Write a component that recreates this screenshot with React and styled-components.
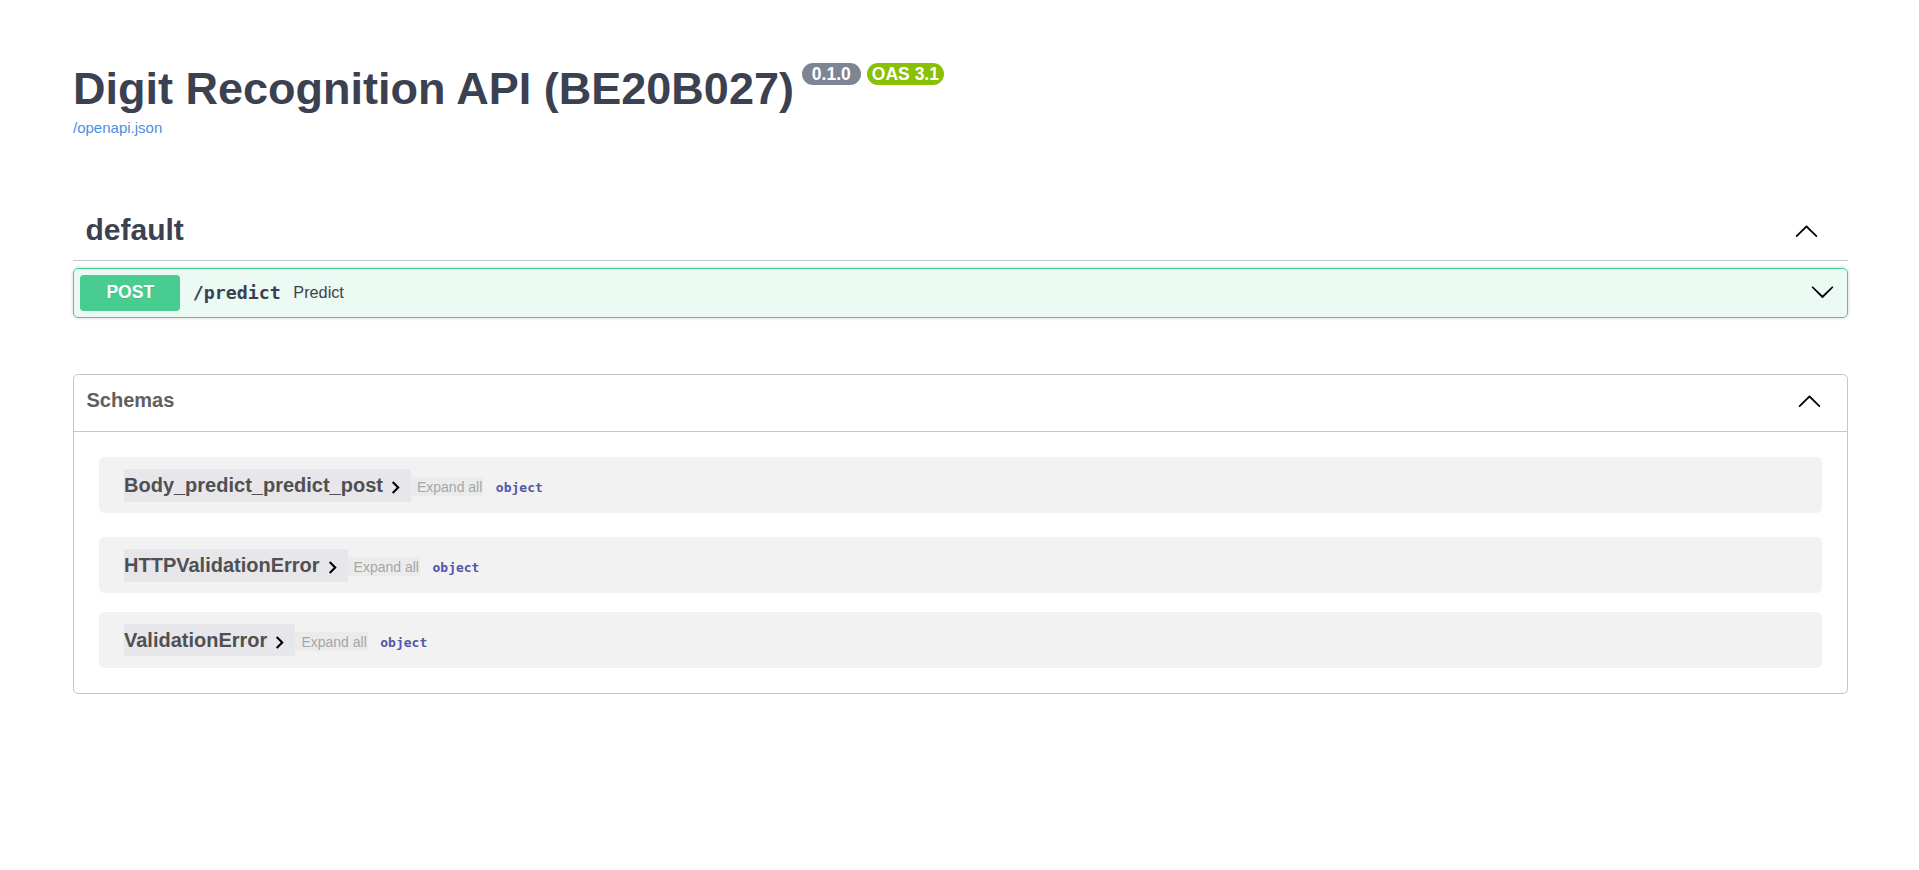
import React from "react";
import styled, { createGlobalStyle } from "styled-components";

const GlobalStyle = createGlobalStyle`
  html, body {
    margin: 0;
    padding: 0;
    background: #fff;
  }
  body {
    font-family: "Liberation Sans", Arial, sans-serif;
    color: #3b4151;
  }
  * {
    box-sizing: border-box;
  }
`;

const Wrapper = styled.div`
  max-width: 1825px;
  margin: 0 auto;
  padding: 0 24px 0 26px;
`;

const Info = styled.div`
  margin: 62.5px 0;
`;

const TitleRow = styled.div`
  display: flex;
  align-items: flex-start;
`;

const Title = styled.h2`
  margin: 0;
  font-size: 45px;
  font-weight: 700;
  line-height: normal;
  color: #3b4151;
`;

const Badge = styled.span`
  display: inline-block;
  margin: 0.5px 0 0 6.25px;
  padding: 2.5px 5px;
  border-radius: 71px;
  background: ${(p) => p.$tone};
  color: #fff;
  font-size: 17.5px;
  font-weight: 700;
  line-height: 17px;
  white-space: pre;

  &:first-of-type {
    margin-left: 8px;
  }
`;

const SpecLink = styled.a`
  display: block;
  margin-top: 4px;
  font-size: 15px;
  line-height: 17.25px;
  color: #4990e2;
  text-decoration: none;
`;

const TagSection = styled.div`
  display: flex;
  flex-direction: column;
`;

const TagHeader = styled.h3`
  display: flex;
  align-items: center;
  margin: 0 0 6.25px;
  padding: 15px 25px 13px 12.5px;
  border-bottom: 1px solid rgba(59, 65, 81, 0.3);
  font-size: 30px;
  font-weight: 700;
  color: #3b4151;
`;

const TagName = styled.span`
  flex: 1;
  line-height: normal;
`;

const ArrowButton = styled.button`
  display: flex;
  align-items: center;
  background: none;
  border: none;
  padding: 0 ${(p) => p.$right}px 0 0;
  margin-top: ${(p) => p.$lift || 0}px;
  cursor: pointer;

  svg {
    width: 25px;
    height: 25px;
    fill: #000;
  }
`;

const Opblock = styled.div`
  margin: 0 0 18.75px;
  border: 1px solid #49cc90;
  border-radius: 5px;
  background: rgba(73, 204, 144, 0.1);
  box-shadow: 0 0 3.75px rgba(0, 0, 0, 0.19);
`;

const Summary = styled.div`
  display: flex;
  align-items: center;
  padding: 6.25px;
`;

const Method = styled.span`
  min-width: 100px;
  padding: 7.5px 0;
  border-radius: 3.75px;
  background: #49cc90;
  color: #fff;
  font-size: 17.5px;
  font-weight: 700;
  line-height: 21px;
  text-align: center;
  text-shadow: 0 1px 0 rgba(0, 0, 0, 0.1);
`;

const Path = styled.span`
  padding: 0 12.5px;
  font-family: "DejaVu Sans Mono", monospace;
  font-size: 18.3px;
  font-weight: 700;
  color: #3b4151;
`;

const Description = styled.span`
  flex: 1;
  font-size: 16.25px;
  color: #3b4151;
`;

const Models = styled.section`
  margin: 37.5px 0;
  padding-bottom: 25px;
  border: 1px solid rgba(59, 65, 81, 0.3);
  border-radius: 5px;
`;

const ModelsHeader = styled.h4`
  display: flex;
  align-items: center;
  height: 57px;
  margin: 0;
  padding: 10px 25px 15px 12.5px;
  border-bottom: 1px solid rgba(59, 65, 81, 0.3);
  font-size: 20px;
  font-weight: 700;
  color: #606060;
`;

const ModelsLabel = styled.span`
  flex: 1;
  line-height: 23px;
`;

const ModelList = styled.div`
  padding: 25px 25px 0;
`;

const ModelContainer = styled.div`
  display: flex;
  align-items: center;
  min-height: 56px;
  margin-bottom: 18.75px;
  padding: 0 25px;
  border-radius: 5px;
  background: rgba(0, 0, 0, 0.05);

  &:first-child {
    margin-bottom: 24px;
  }
  &:last-child {
    margin-bottom: 0;
  }
`;

const ModelBox = styled.div`
  display: flex;
  align-items: baseline;
`;

const ModelTitle = styled.button`
  display: inline-flex;
  align-items: center;
  padding: 1.3px 0;
  border: none;
  background: #e7e7eb;
  font-family: "Liberation Sans", Arial, sans-serif;
  font-size: 20px;
  font-weight: 700;
  line-height: 23px;
  color: #505050;
  cursor: pointer;

  svg {
    width: 25px;
    height: 25px;
    margin: 5px 3px 0 0;
    fill: #000;
  }
`;

const ExpandAll = styled.button`
  padding: 1.6px 1px 1.6px 6px;
  border: none;
  background: #ebebeb;
  font-family: "Liberation Sans", Arial, sans-serif;
  font-size: 14px;
  line-height: 16px;
  color: #a6a6a6;
  cursor: pointer;
`;

const PropType = styled.span`
  margin-left: 12.5px;
  font-family: "DejaVu Sans Mono", monospace;
  font-size: 13px;
  font-weight: 700;
  color: #55a;
`;

const ArrowUp = () => (
  <svg viewBox="0 0 20 20" aria-hidden="true">
    <path d="M17.418 14.908c.272.268.709.268.979 0s.271-.701 0-.969l-7.908-7.83c-.27-.268-.707-.268-.979 0l-7.908 7.83c-.27.268-.27.701 0 .969.271.268.709.268.979 0L10 7.767l7.418 7.141z" />
  </svg>
);

const ArrowDown = () => (
  <svg viewBox="0 0 20 20" aria-hidden="true">
    <path d="M17.418 6.109c.272-.268.709-.268.979 0s.271.701 0 .969l-7.908 7.83c-.27.268-.707.268-.979 0l-7.908-7.83c-.27-.268-.27-.701 0-.969.271-.268.709-.268.979 0L10 13.25l7.418-7.141z" />
  </svg>
);

const Chevron = () => (
  <svg viewBox="0 0 24 24" aria-hidden="true">
    <path d="M10 6 8.59 7.41 13.17 12l-4.58 4.59L10 18l6-6z" />
  </svg>
);

const schemas = ["Body_predict_predict_post", "HTTPValidationError", "ValidationError"];

export default function App() {
  return (
    <>
      <GlobalStyle />
      <Wrapper>
        <Info>
          <TitleRow>
            <Title>Digit Recognition API (BE20B027)</Title>
            <Badge $tone="#7d8492"> 0.1.0 </Badge>
            <Badge $tone="#89bf04">OAS 3.1</Badge>
          </TitleRow>
          <SpecLink href="#">/openapi.json</SpecLink>
        </Info>

        <TagSection>
          <TagHeader>
            <TagName>default</TagName>
            <ArrowButton $right={4}>
              <ArrowUp />
            </ArrowButton>
          </TagHeader>
          <Opblock>
            <Summary>
              <Method>POST</Method>
              <Path>/predict</Path>
              <Description>Predict</Description>
              <ArrowButton $right={6.25} $lift={-2}>
                <ArrowDown />
              </ArrowButton>
            </Summary>
          </Opblock>
        </TagSection>

        <Models>
          <ModelsHeader>
            <ModelsLabel>Schemas</ModelsLabel>
            <ArrowButton $right={0}>
              <ArrowUp />
            </ArrowButton>
          </ModelsHeader>
          <ModelList>
            {schemas.map((name) => (
              <ModelContainer key={name}>
                <ModelBox>
                  <ModelTitle>
                    <span>{name}</span>
                    <Chevron />
                  </ModelTitle>
                  <ExpandAll>Expand all</ExpandAll>
                  <PropType>object</PropType>
                </ModelBox>
              </ModelContainer>
            ))}
          </ModelList>
        </Models>
      </Wrapper>
    </>
  );
}
